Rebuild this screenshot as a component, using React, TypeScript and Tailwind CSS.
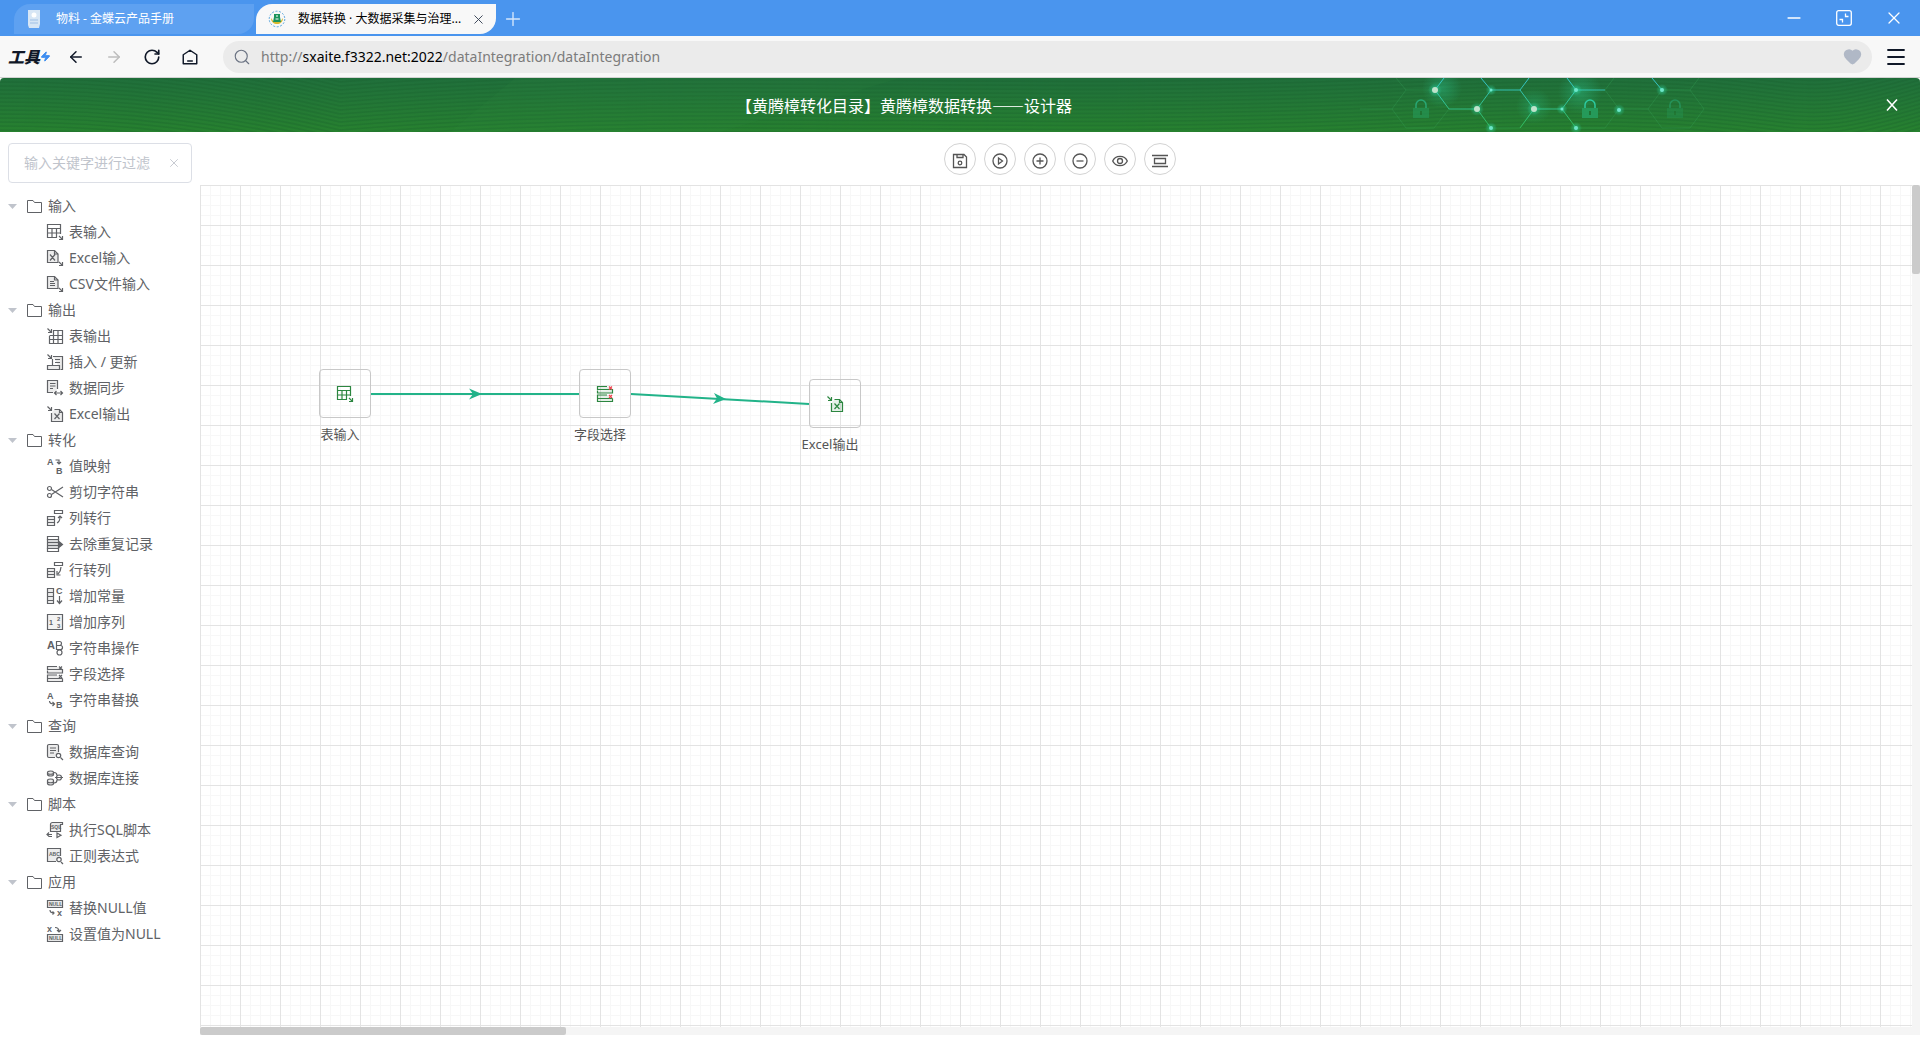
import type { ReactNode } from 'react';
import { ArrowLeft, ArrowRight, Heart, Menu, Minus, Plus, RotateCw, Search, X, Zap } from 'lucide-react';

type IconName =
  | 'tableIn' | 'excelIn' | 'csvIn'
  | 'tableOut' | 'upsert' | 'sync' | 'excelOut'
  | 'mapping' | 'cut' | 'colToRow' | 'dedupe' | 'rowToCol' | 'constant' | 'sequence' | 'stringOp' | 'select' | 'selectRed' | 'replace'
  | 'dbQuery' | 'dbJoin' | 'sql' | 'regex' | 'replaceNull' | 'setNull';

const arrowIn = <path d="M.5.5l3.500 3.500M4.500 1v3.500H1" />;
const arrowCorner = <path d="M12 12l3.200 3.200M15.500 12v3.500H12" />;
const rows = <path fill="currentColor" fillOpacity=".12" d="M10 .5H.5v3h15V4M.5 4.500v2.500h15V4M10 9H.5v3.500h15M.5 12.500v3h15v-3" />;
const crossPath = 'M12 .5l3 3M15 .5l-3 3M12 9l3 3M15 9l-3 3';

function IconText({ x, y, size = 9, children }: { x: number; y: number; size?: number; children: ReactNode }) {
  return (
    <text x={x} y={y} fontSize={size} fontWeight="bold" fill="currentColor" stroke="none" fontFamily="Liberation Sans">
      {children}
    </text>
  );
}

const glyphs: Record<IconName, ReactNode> = {
  tableIn: <><path d="M10 13.500H.5V.5h13v9.500M.5 4.500h13M.5 9h13M5 4.500v9M9.500 4.500v9" />{arrowCorner}</>,
  excelIn: <><path fill="currentColor" fillOpacity=".12" d="M11 12.500H.5V.5h7l3.500 3.500z" /><path d="M7.500.5V4H11M3 4.500l5 6M8 4.500l-5 6" />{arrowCorner}</>,
  csvIn: <><path fill="currentColor" fillOpacity=".12" d="M11 12.500H.5V.5h7l3.500 3.500z" /><path d="M7.500.5V4H11M3 5.500h4M3 7.500h5M3 9.500h5" />{arrowCorner}</>,
  tableOut: <><path d="M6 2.500h9.500v13h-13V8M2.500 7.500h13M2.500 11.500h13M6.500 2.500v13M11 2.500v13" />{arrowIn}</>,
  upsert: <><path fill="currentColor" fillOpacity=".12" d="M6 2.500h9.500v13h-2M5.500 5v6M8 5.500h5M8 8.500h5" /><path fill="currentColor" fillOpacity=".12" d="M.5 11.500h12v4H.5z" />{arrowIn}</>,
  sync: <><path fill="currentColor" fillOpacity=".12" d="M6 12.500H.5V.5h10V9" /><path d="M3 3.500h5.500M3 6h5.500M3 8.500h3M7.500 13h8M9.500 11l-2 2 2 2M13.500 11l2 2-2 2" /></>,
  excelOut: <><path fill="currentColor" fillOpacity=".12" d="M7.500 3.500h5l3 3v9h-11V7" /><path d="M12.500 3.500v3h3M7.500 7.500l5 5.500M12.500 7.500L7.500 13" />{arrowIn}</>,
  mapping: <><path d="M8.500 2h3.500v3.500M10 4l2 2 2-2" /><IconText x={0} y={7}>A</IconText><IconText x={9} y={16}>B</IconText></>,
  cut: <><circle cx="2.500" cy="4.500" r="2" /><circle cx="2.500" cy="11.500" r="2" /><path d="M4.500 5.500L16 13M4.500 10.500L16 3" /></>,
  colToRow: <><path fill="currentColor" fillOpacity=".12" d="M.5 6.500h7v9h-7z" /><path d="M.5 9.500h7M.5 12.500h7M7.500.5h8v3h-8zM10 13c2-1 3-3 3-6M11 8l2-2 2 2" /></>,
  dedupe: <><path d="M.5.5h11v3H.5zM.5 12.500h11v3H.5z" /><path fill="currentColor" fillOpacity=".25" d="M.5 3.500h11v3H.5zM.5 6.500h11v3H.5zM.5 9.500h11v3H.5z" /><path fill="currentColor" d="M12.500 6l3 2.500-3 2.500z" /></>,
  rowToCol: <><path fill="currentColor" fillOpacity=".12" d="M.5 6.500h7v9h-7z" /><path d="M.5 9.500h7M.5 12.500h7M7.500.5h8v3h-8zM14 5c0 3-1 5-3 7M10 9v4h3.500" /></>,
  constant: <><path fill="currentColor" fillOpacity=".12" d="M.5.5h6v15h-6z" /><path d="M.5 4.500h6M.5 8.500h6M.5 12.500h6M12.500 8v7M10 12.500l2.500 3 2.500-3" /><IconText x={9} y={6}>C</IconText></>,
  sequence: <><path fill="currentColor" fillOpacity=".08" d="M.5.5h15v15H.5z" /><IconText x={2} y={11} size={7}>1</IconText><IconText x={10} y={7} size={6}>2</IconText><IconText x={10} y={14} size={6}>3</IconText></>,
  stringOp: <><IconText x={0} y={9} size={11}>A</IconText><path d="M9.500 1.500h3a2 2 0 010 4h-3zM9.500 5.500h4a2 2 0 010 4h-4z" /><circle cx="12.500" cy="12.500" r="2.500" /></>,
  select: <>{rows}<path d={crossPath} /></>,
  selectRed: <>{rows}<path stroke="#f04450" d={crossPath} /></>,
  replace: <><IconText x={0} y={7}>A</IconText><IconText x={9} y={16}>B</IconText><path d="M2.500 9c0 2 1.500 3 4.500 3M5.500 10L7.500 12l-2 2" /></>,
  dbQuery: <><path fill="currentColor" fillOpacity=".12" d="M8 13.500H2a1.500 1.500 0 01-1.500-1.500V2A1.500 1.500 0 012 .5h8A1.500 1.500 0 0111.500 2v6" /><path d="M3 4h6M3 6.500h6M3 9h4M13.500 13.500L16 16" /><circle cx="11.500" cy="11.500" r="2.200" /></>,
  dbJoin: <><path fill="currentColor" fillOpacity=".12" d="M.5 2.500c0-2 6-2 6 0v2c0 2-6 2-6 0zM.5 10.500c0-2 6-2 6 0v3c0 2-6 2-6 0z" /><path d="M.5 3.500c1 1 5 1 6 0M.5 12c1 1 5 1 6 0M7 2.500c2 0 3 1 3 3M7 13c2 0 3-1 3-3M8 7.500h8" /><circle cx="12" cy="7.500" r="2.500" /></>,
  sql: <><path fill="currentColor" fillOpacity=".12" d="M3.500 9.500v-7a2 2 0 012-2h10v2h-2v7z" /><path d="M0 12.500h5M2 10.500l-2 2 2 2h3M10 11l4 2.200-4 2.300z" /><IconText x={4} y={7} size={5}>SQL</IconText></>,
  regex: <><path fill="currentColor" fillOpacity=".12" d="M9 13.500H.5V.5h13V8" /><path d="M14 14l2 2" /><circle cx="12" cy="11.500" r="2.200" /><IconText x={2} y={8} size={5}>ABC</IconText></>,
  replaceNull: <><path fill="currentColor" fillOpacity=".15" d="M.5.5h15v7H.5z" /><IconText x={2} y={6} size={5}>NULL</IconText><path d="M3 10c0 2 1 3 4 3M5.500 11.500L7 13l-1.500 1.500" /><IconText x={10} y={16}>x</IconText></>,
  setNull: <><path fill="currentColor" fillOpacity=".15" d="M.5 8.500h15v7H.5z" /><IconText x={2} y={14} size={5}>NULL</IconText><path d="M8 1.500c2 0 4 1 4 4M10 4l2 2 2-2" /><IconText x={0} y={6}>x</IconText></>,
};

const Icon = ({ name }: { name: IconName }) => (
  <svg viewBox="0 0 16 16" className="size-4 shrink-0 overflow-visible" fill="none" stroke="currentColor" strokeWidth="1.200">
    {glyphs[name]}
  </svg>
);

const groups: { label: string; items: [IconName, string][] }[] = [
  { label: '输入', items: [['tableIn', '表输入'], ['excelIn', 'Excel输入'], ['csvIn', 'CSV文件输入']] },
  { label: '输出', items: [['tableOut', '表输出'], ['upsert', '插入 / 更新'], ['sync', '数据同步'], ['excelOut', 'Excel输出']] },
  {
    label: '转化',
    items: [
      ['mapping', '值映射'], ['cut', '剪切字符串'], ['colToRow', '列转行'], ['dedupe', '去除重复记录'], ['rowToCol', '行转列'],
      ['constant', '增加常量'], ['sequence', '增加序列'], ['stringOp', '字符串操作'], ['select', '字段选择'], ['replace', '字符串替换'],
    ],
  },
  { label: '查询', items: [['dbQuery', '数据库查询'], ['dbJoin', '数据库连接']] },
  { label: '脚本', items: [['sql', '执行SQL脚本'], ['regex', '正则表达式']] },
  { label: '应用', items: [['replaceNull', '替换NULL值'], ['setNull', '设置值为NULL']] },
];

const tools: { label: string; icon: ReactNode }[] = [
  { label: '保存', icon: <><path d="M1.500 1.500h10.500l2.500 2.500v10.500h-13zM5 1.500v3h6v-3" /><circle cx="8" cy="10" r="1.800" /></> },
  { label: '运行', icon: <><circle cx="8" cy="8" r="7" /><path d="M6.500 5v6l4-3z" /></> },
  { label: '放大', icon: <><circle cx="8" cy="8" r="7" /><path d="M4.500 8h7M8 4.500v7" /></> },
  { label: '缩小', icon: <><circle cx="8" cy="8" r="7" /><path d="M4.500 8h7" /></> },
  { label: '预览', icon: <><path d="M.7 8C3.500 1.800 12.500 1.800 15.300 8 12.500 14.200 3.500 14.200.7 8z" /><circle cx="8" cy="8" r="2.500" /></> },
  { label: '对齐', icon: <path d="M0 2.500h16M0 13.500h16M2.500 5.500h11v5h-11z" /> },
];

const nodes: { icon: IconName; label: string; place: string }[] = [
  { icon: 'tableIn', label: '表输入', place: 'left-[119px] top-[184px]' },
  { icon: 'selectRed', label: '字段选择', place: 'left-[379px] top-[184px]' },
  { icon: 'excelOut', label: 'Excel输出', place: 'left-[609px] top-[194px]' },
];

const TabBar = () => (
  <div className="flex h-9 items-end bg-[#4a95ee] pb-0.5 pl-3.5 text-xs">
    <div className="flex h-[30px] w-60 items-center rounded-tl-2xl rounded-br-2xl bg-[#5ea1f1] pl-3.5 text-white">
      <svg viewBox="0 0 12 18" className="mr-4 h-[18px] w-3">
        <path d="M0 0h12v14l-1 4H1l-1-3z" fill="#d7e6f5" />
        <circle cx="6" cy="5" r="2.500" fill="#fff" />
        <path d="M2 10h8M2 13h8" stroke="#9fc0e6" />
      </svg>
      物料 - 金蝶云产品手册
    </div>
    <div className="ml-0.5 flex h-[30px] w-60 items-center rounded-tl-2xl rounded-br-2xl bg-[#f8f8f8] pl-3 text-black">
      <svg viewBox="0 0 18 18" className="mr-3 size-[18px]" fill="none">
        <circle cx="9" cy="9" r="7.800" stroke="#5aa5dc" strokeDasharray="2 1.500" />
        <path d="M3 8c0 8 12 8 12 0l-3 4H6z" fill="#d9b92e" />
        <path d="M6 4h6v3l1 5H5l1-5z" fill="#19935c" />
        <path d="M8 6h2M7.500 9h3" stroke="#fff" />
      </svg>
      <span className="flex-1 whitespace-nowrap">数据转换 · 大数据采集与治理...</span>
      <button aria-label="关闭标签页" className="mr-2.5 text-gray-700"><X size={15} strokeWidth={1.5} /></button>
    </div>
    <button aria-label="新标签页" className="mb-1 ml-1.5 text-[#d5e6fb]"><Plus size={22} strokeWidth={1.5} /></button>
    <div className="mr-4 mb-1.5 ml-auto flex items-center gap-8 text-white">
      <button aria-label="最小化"><Minus size={20} strokeWidth={2} /></button>
      <button aria-label="还原">
        <svg viewBox="0 0 16 16" className="size-4" fill="none" stroke="currentColor" strokeWidth="1.300">
          <rect x=".7" y=".7" width="14.600" height="14.600" rx="2" />
          <path d="M9.500 3.500v3h3M3.500 9.500h3v3" />
        </svg>
      </button>
      <button aria-label="关闭"><X size={20} strokeWidth={1.500} /></button>
    </div>
  </div>
);

const AddressBar = () => (
  <div className="flex h-[42px] items-center border-b border-[#d2d2d2] bg-[#f8f8f8] pr-3 pl-2 text-gray-900">
    <span className="text-base leading-5 font-black italic">工具</span>
    <Zap size={11} className="mr-4 fill-[#3d8df0] text-[#3d8df0]" />
    <div className="flex items-center gap-5">
      <button aria-label="后退"><ArrowLeft size={18} /></button>
      <button aria-label="前进" className="text-[#bdbdbd]"><ArrowRight size={18} /></button>
      <button aria-label="刷新"><RotateCw size={18} strokeWidth={2.200} /></button>
      <button aria-label="主页">
        <svg viewBox="0 0 16 16" className="size-[18px]" fill="none" stroke="currentColor" strokeWidth="1.300">
          <path d="M2 6l6-4 6 4v8H2zM5.500 11.500h5" strokeLinejoin="round" />
        </svg>
      </button>
    </div>
    <form className="ml-6 flex h-8 flex-1 items-center rounded-full bg-[#ebebeb] px-2.5">
      <Search size={18} strokeWidth={1.5} className="mr-2.5 text-gray-500" />
      <a href="http://sxaite.f3322.net:2022/dataIntegration/dataIntegration" className="flex-1 text-sm leading-5 text-[#7c7c7c]">
        http://<span className="text-black">sxaite.f3322.net:2022</span>/dataIntegration/dataIntegration
      </a>
      <button type="button" aria-label="收藏"><Heart size={19} className="fill-[#b0b8c6] text-[#b0b8c6]" /></button>
    </form>
    <button aria-label="菜单" className="ml-3"><Menu size={24} strokeWidth={1.800} /></button>
  </div>
);

const Lock = ({ x, opacity }: { x: number; opacity: number }) => (
  <g transform={`translate(${x} 21)`} opacity={opacity}>
    <path d="M3 9V6a5 5 0 0110 0v3" fill="none" stroke="#2cc9a0" strokeWidth="1.500" />
    <path d="M0 9h16v10H0z" fill="#259a5a" />
    <path d="M8 12v4" stroke="#1f7435" strokeWidth="2" />
  </g>
);

const waves = Array.from({ length: 26 }, (_, i) => i * 4 - 40);
const dots: [number, number, number][] = [[75, 12, 3], [117, 31, 3], [131, 12, 1.5], [174, 31, 3], [216, 12, 2], [259, 32, 2], [302, 12, 2], [131, 50, 2], [216, 50, 2], [202, 31, 1.5]];

const PageHeader = () => (
  <header className="relative flex h-[54px] items-center overflow-hidden rounded-t bg-linear-to-b from-[#206f3b] to-[#27812f] text-white">
    <svg className="absolute inset-0 h-full w-full" fill="none" aria-hidden="true">
      <g stroke="#185d2b" strokeOpacity=".25" strokeWidth="1.500">
        {waves.map((y) => (
          <path key={y} d={`M0 ${y}C120 ${y} 220 ${y + 12} 340 ${y + 40}M340 ${y + 20}C700 ${y - 10} 1000 ${y + 20} 1420 ${y}S1750 ${y + 40} 1920 ${y - 10}`} />
        ))}
      </g>
      <path d="M515 0L450 54h270L900 0z" fill="#2f8a45" fillOpacity=".12" />
    </svg>
    <svg viewBox="0 0 560 54" className="absolute right-0 h-[54px] w-[560px]" fill="none" aria-hidden="true">
      <defs>
        <linearGradient id="net" x1="0" y1="0" x2="0" y2="54" gradientUnits="userSpaceOnUse">
          <stop stopColor="#35c5d0" />
          <stop offset="1" stopColor="#2fb84c" />
        </linearGradient>
        <radialGradient id="glow">
          <stop stopColor="#2fe0b0" stopOpacity=".6" />
          <stop offset="1" stopColor="#2fe0b0" stopOpacity="0" />
        </radialGradient>
      </defs>
      <path stroke="#36a058" strokeOpacity=".35" d="M36 0l10 12h29M46 12L32 31l14 19h28l15-19M0 31h32M131 50h29l14-19M216 50h29l14-19h29M245 12l14 19M245 12l9-12M302 12L288 31l14 19h28l14-19-14-19h-28M330 12l9-12" />
      <path stroke="url(#net)" d="M84 0l-9 12L89 31h28l14-19-10-12M131 12h29l9-12M160 12l14 19h28l14-19-9-12M117 31l14 19M174 31l-14 19M202 31l14 19M216 12h29M292 0l10 12" />
      <circle cx="82" cy="10" r="20" fill="url(#glow)" opacity=".5" />
      <circle cx="174" cy="28" r="18" fill="url(#glow)" opacity=".4" />
      <circle cx="220" cy="14" r="22" fill="url(#glow)" opacity=".5" />
      {dots.map(([cx, cy, r]) => (
        <g key={`${cx}-${cy}`}>
          <circle cx={cx} cy={cy} r={r + 4} fill="url(#glow)" />
          <circle cx={cx} cy={cy} r={r} fill={r > 2 ? '#bfe3cb' : '#6ee6c8'} />
        </g>
      ))}
      <Lock x={53} opacity={0.6} />
      <Lock x={222} opacity={1} />
      <Lock x={307} opacity={0.35} />
    </svg>
    <h1 lang="zh-CN" className="relative flex-1 text-center font-['Noto_Sans_CJK_SC',sans-serif] text-base leading-6 font-normal">【黄腾樟转化目录】黄腾樟数据转换——设计器</h1>
    <div className="relative flex w-28 justify-end pr-5">
      <button aria-label="关闭设计器">
        <svg viewBox="0 0 16 16" className="size-4" fill="none" stroke="currentColor" strokeWidth="1.600"><path d="M3 2.500l10 11M13 2.500L3 13.500" /></svg>
      </button>
    </div>
  </header>
);

const Sidebar = () => (
  <aside className="w-[200px] shrink-0 text-sm leading-[26px] text-[#606266]">
    <div className="mx-2 mt-[11px] flex h-10 items-center rounded border border-[#dcdfe6] pr-2.5 pl-[15px]">
      <input
        type="text"
        aria-label="输入关键字进行过滤"
        placeholder="输入关键字进行过滤"
        className="w-full min-w-0 flex-1 outline-none placeholder:text-[#c0c4cc]"
      />
      <button aria-label="清空" className="text-[#c0c4cc]"><X size={14} strokeWidth={1.5} /></button>
    </div>
    <ul className="mt-2.5">
      {groups.map((group) => (
        <li key={group.label}>
          <button className="flex h-[26px] w-full items-center pl-2">
            <svg viewBox="0 0 9 5" className="mr-2.5 h-[5px] w-[9px]" fill="#c0c4cc"><path d="M0 0h9L4.500 5z" /></svg>
            <svg viewBox="0 0 15 13" className="mr-1.5 h-[13px] w-[15px]" fill="none" stroke="currentColor">
              <path d="M.5 12.500V.5H6l1.500 2h7v10z" />
            </svg>
            {group.label}
          </button>
          <ul>
            {group.items.map(([icon, label]) => (
              <li key={label} className="flex h-[26px] items-center gap-1.5 pl-[47px]">
                <Icon name={icon} />
                {label}
              </li>
            ))}
          </ul>
        </li>
      ))}
    </ul>
  </aside>
);

const Canvas = () => (
  <div className="relative flex-1 overflow-hidden bg-[linear-gradient(to_right,#e3e3e3_1px,transparent_1px),linear-gradient(to_bottom,#e3e3e3_1px,transparent_1px),linear-gradient(to_right,#f7f7f7_1px,transparent_1px),linear-gradient(to_bottom,#f7f7f7_1px,transparent_1px)] bg-[size:40px_40px,40px_40px,10px_10px,10px_10px]">
    <svg className="absolute inset-0 h-full w-full" aria-hidden="true">
      <g stroke="#22b389" strokeWidth="2">
        <path d="M171 209h208M431 209l178 10" />
      </g>
      <g fill="#22b389">
        <path d="M282 209l-13-5.500 4 5.500-4 5.500z" />
        <path d="M526 214l-12-6 3 5.500-4 5.500z" />
      </g>
    </svg>
    {nodes.map((node) => (
      <div key={node.label} className={`absolute w-[52px] ${node.place}`}>
        <div className="flex h-[49px] items-center justify-center rounded border border-[#c8c8c8] text-[#2c8640]">
          <Icon name={node.icon} />
        </div>
        <div className="mt-1.5 -ml-2.5 flex w-[62px] justify-center text-[13px] leading-5 whitespace-nowrap text-[#555]">{node.label}</div>
      </div>
    ))}
  </div>
);

const Designer = () => (
  <main className="flex min-w-0 flex-1 flex-col pb-[5px]">
    <div className="flex h-[53px] items-center justify-center gap-2">
      {tools.map((tool) => (
        <button key={tool.label} aria-label={tool.label} className="flex size-8 items-center justify-center rounded-full border border-[#d3d3d3] pt-1 text-[#555]">
          <svg viewBox="0 0 16 16" className="size-4" fill="none" stroke="currentColor" strokeWidth="1.300">{tool.icon}</svg>
        </button>
      ))}
    </div>
    <div className="flex min-h-0 flex-1">
      <Canvas />
      <div className="w-2 bg-[#f5f5f5]"><div className="h-[89px] rounded-xs bg-[#cbcbcb]" /></div>
    </div>
    <div className="h-2 bg-[#f5f5f5]"><div className="h-2 w-[366px] rounded-xs bg-[#cbcbcb]" /></div>
  </main>
);

export default function App() {
  return (
    <div className="flex h-screen flex-col overflow-hidden bg-white font-['Noto_Sans','Noto_Sans_CJK_SC',sans-serif]">
      <TabBar />
      <AddressBar />
      <PageHeader />
      <div className="flex min-h-0 flex-1">
        <Sidebar />
        <Designer />
      </div>
    </div>
  );
}
